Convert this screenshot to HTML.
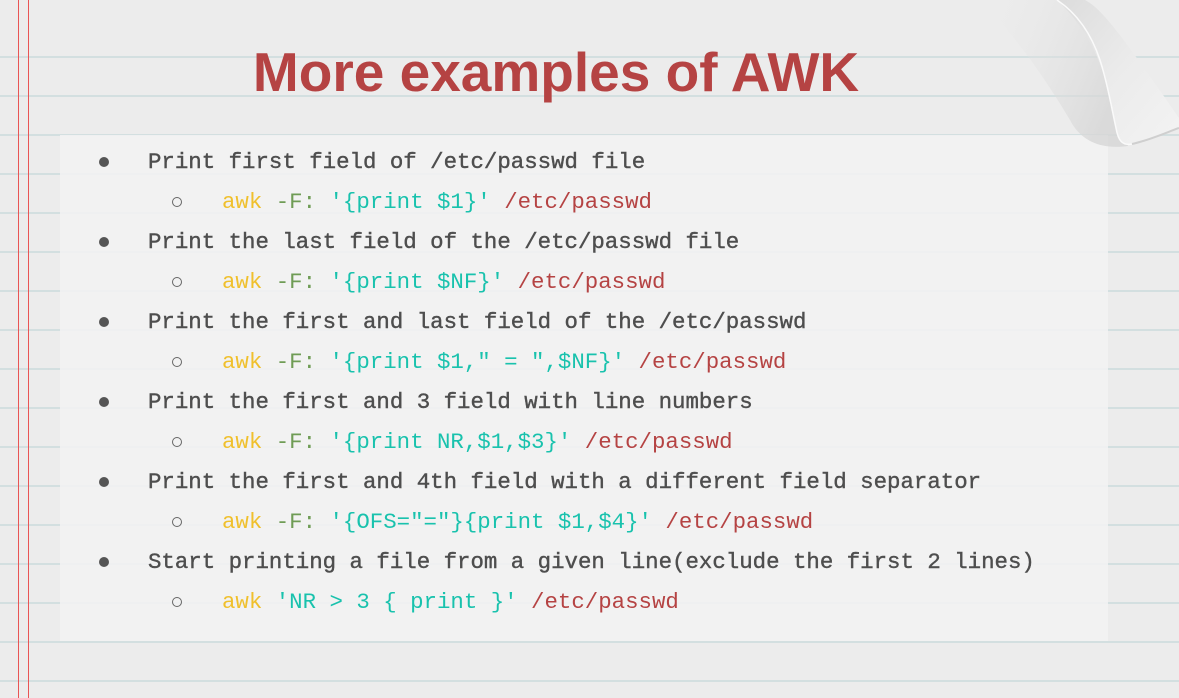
<!DOCTYPE html>
<html><head><meta charset="utf-8"><style>
html,body{margin:0;padding:0}
body{width:1179px;height:698px;overflow:hidden;position:relative;background:#ececec;}
.lines{position:absolute;left:0;top:39px;width:1179px;height:659px;background:repeating-linear-gradient(to bottom,transparent 0px,transparent 17px,#d3dfe0 17px,#d3dfe0 19px,transparent 19px,transparent 39px);background-position:0 0}
.m1,.m2{position:absolute;top:0;height:698px;width:1px;background:#e95555}
.m1{left:18px}.m2{left:28px}
.box{position:absolute;left:60px;top:135px;width:1048px;height:506px;background:rgba(243,243,243,0.85)}
.title{position:absolute;left:0;width:1112px;top:40px;text-align:center;font:bold 55px "Liberation Sans",sans-serif;color:#b54343;letter-spacing:0px}
.curl{position:absolute;left:900px;top:0;width:279px;height:200px}
.row{position:absolute;font-family:"Liberation Mono",monospace;font-size:22.4px;white-space:pre;line-height:26px}
.t{left:148px;color:#4e4e4e;-webkit-text-stroke:0.4px #4e4e4e}
.c{left:222px}
.b{position:absolute;left:99px;width:10px;height:10px;border-radius:50%;background:#555}
.o{position:absolute;left:172px;width:8px;height:8px;border-radius:50%;border:1.3px solid #666}
.y{color:#f0c02c}.g{color:#6f9c55}.s{color:#19c2ad}.r{color:#b54343}
</style></head><body>
<div class="lines"></div>
<div class="m1"></div><div class="m2"></div>
<div class="box"></div>
<svg class="curl" viewBox="0 0 279 200">
<defs>
<linearGradient id="gc" x1="0" y1="0" x2="1" y2="1"><stop offset="0" stop-color="#dcdcdc"/><stop offset="0.5" stop-color="#ebebeb"/><stop offset="1" stop-color="#f3f3f3"/></linearGradient>
<linearGradient id="sh" x1="0" y1="0" x2="1" y2="0.4"><stop offset="0" stop-color="#ececec" stop-opacity="0"/><stop offset="1" stop-color="#d6d6d6" stop-opacity="0.8"/></linearGradient>
</defs>
<path d="M80 0 L160 0 C190 20 210 90 228 146 C200 150 180 140 170 120 C140 70 110 30 80 0Z" fill="url(#sh)"/>
<path d="M157 0 L185 0 C200 8 215 25 279 118 L279 128 C262 134 245 140 232 144 C222 146 218 140 216 128 C210 90 200 40 157 0Z" fill="url(#gc)"/>
<path d="M157 0 C175 12 190 30 200 60 C208 85 212 110 216 128 C218 140 222 146 232 144" fill="none" stroke="#fafafa" stroke-width="1.5"/>
<path d="M232 144 C250 140 265 133 279 128" fill="none" stroke="#cfcfcf" stroke-width="2"/>
</svg>
<div class="title">More examples of AWK</div>

<div class="b" style="top:157px"></div><div class="row t" style="top:149px">Print first field of /etc/passwd file</div>
<div class="o" style="top:197px"></div><div class="row c" style="top:189px"><span class="y">awk</span> <span class="g">-F:</span> <span class="s">'{print $1}'</span> <span class="r">/etc/passwd</span></div>

<div class="b" style="top:237px"></div><div class="row t" style="top:229px">Print the last field of the /etc/passwd file</div>
<div class="o" style="top:277px"></div><div class="row c" style="top:269px"><span class="y">awk</span> <span class="g">-F:</span> <span class="s">'{print $NF}'</span> <span class="r">/etc/passwd</span></div>

<div class="b" style="top:317px"></div><div class="row t" style="top:309px">Print the first and last field of the /etc/passwd</div>
<div class="o" style="top:357px"></div><div class="row c" style="top:349px"><span class="y">awk</span> <span class="g">-F:</span> <span class="s">'{print $1," = ",$NF}'</span> <span class="r">/etc/passwd</span></div>

<div class="b" style="top:397px"></div><div class="row t" style="top:389px">Print the first and 3 field with line numbers</div>
<div class="o" style="top:437px"></div><div class="row c" style="top:429px"><span class="y">awk</span> <span class="g">-F:</span> <span class="s">'{print NR,$1,$3}'</span> <span class="r">/etc/passwd</span></div>

<div class="b" style="top:477px"></div><div class="row t" style="top:469px">Print the first and 4th field with a different field separator</div>
<div class="o" style="top:517px"></div><div class="row c" style="top:509px"><span class="y">awk</span> <span class="g">-F:</span> <span class="s">'{OFS="="}{print $1,$4}'</span> <span class="r">/etc/passwd</span></div>

<div class="b" style="top:557px"></div><div class="row t" style="top:549px">Start printing a file from a given line(exclude the first 2 lines)</div>
<div class="o" style="top:597px"></div><div class="row c" style="top:589px"><span class="y">awk</span> <span class="s">'NR &gt; 3 { print }'</span> <span class="r">/etc/passwd</span></div>
</body></html>
